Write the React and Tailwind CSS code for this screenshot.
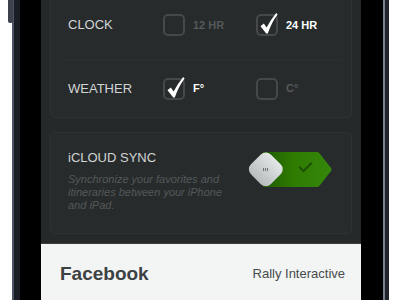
import React from "react";

const font = { fontFamily: '"Liberation Sans", Arial, sans-serif' };

const Check = () => (
  <svg
    className="absolute left-0 top-0"
    width="24"
    height="24"
    viewBox="0 0 24 24"
    style={{ overflow: "visible" }}
  >
    <path
      d="M4.5 12.2 L7.8 9.6 L10.6 13.4 Q14.5 6 20.2 -1 L21.6 0.6 Q15.6 8.5 11.8 19.6 L10.2 19.6 Z"
      fill="#ffffff"
    />
  </svg>
);

const Box = ({ checked, label }) => (
  <div className="flex items-center w-[93px]">
    <div className="relative w-[22px] h-[22px]">
      <div className="w-[22px] h-[22px] rounded-[5px] border-2 border-[#46494a]" />
      {checked && <Check />}
    </div>
    <span
      className={
        "ml-[8px] text-[11px] font-bold " +
        (checked ? "text-white" : "text-[#55595a]")
      }
    >
      {label}
    </span>
  </div>
);

const Toggle = () => (
  <svg width="88" height="38" viewBox="0 0 88 38">
    <defs>
      <linearGradient id="grn" x1="0" y1="0" x2="1" y2="0">
        <stop offset="0" stopColor="#1f5a00" />
        <stop offset="0.45" stopColor="#2f7c03" />
        <stop offset="1" stopColor="#34880a" />
      </linearGradient>
      <linearGradient id="knob" x1="0" y1="0" x2="0" y2="1">
        <stop offset="0" stopColor="#e4e7e8" />
        <stop offset="1" stopColor="#b8bcbd" />
      </linearGradient>
    </defs>
    <path
      d="M16 1 L70 1 Q71.5 1 72.5 2.3 L84.2 17.3 Q85 18.5 84.2 19.7 L72.5 34.7 Q71.5 36 70 36 L16 36 Z"
      fill="url(#grn)"
    />
    <path
      d="M53 15 L56.5 18.5 L64 11 L65.5 12.5 L56.5 21.5 L51.5 16.5 Z"
      fill="#1f4f05"
    />
    <rect
      x="4.8"
      y="4.3"
      width="28"
      height="28"
      rx="7"
      fill="url(#knob)"
      transform="rotate(45 18.8 18.3)"
    />
    <rect x="16" y="17" width="1" height="3" fill="#6b6f70" />
    <rect x="18" y="17" width="1" height="3" fill="#6b6f70" />
    <rect x="20" y="17" width="1" height="3" fill="#6b6f70" />
  </svg>
);

export default function App() {
  return (
    <div className="w-[400px] h-[300px] bg-white flex overflow-hidden relative" style={font}>
      {/* left frame */}
      <div className="w-[12px] h-full bg-white relative">
        <div className="absolute left-[8px] top-0 w-[5px] h-[23px] bg-[#3c424b] rounded-b-[2px]" />
      </div>
      <div className="w-[2px] h-full bg-[#4c5462]" />
      <div className="w-[6px] h-full bg-[#1a1e24]" />
      <div className="w-[21px] h-full bg-black" />

      {/* screen */}
      <div className="w-[320px] h-full bg-[#25292a] flex flex-col">
        <div className="px-[9px]">
          <div className="-mt-[6px] h-[124px] rounded-[5px] border border-[#2e3233] bg-[#272b2c] flex flex-col">
            <div className="h-[64px] pb-[4px] flex items-center pl-[17px]">
              <span className="w-[95px] text-[13px] text-[#d2d5d6]">CLOCK</span>
              <Box label="12 HR" />
              <Box checked label="24 HR" />
            </div>
            <div className="h-px ml-[9px] mr-[10px] bg-[#2c3031]" />
            <div className="flex-1 flex items-center pl-[17px]">
              <span className="w-[95px] text-[13px] text-[#d2d5d6]">WEATHER</span>
              <Box checked label="F°" />
              <Box label="C°" />
            </div>
          </div>

          <div className="mt-[14px] h-[102px] rounded-[5px] border border-[#2e3233] bg-[#272b2c] flex pl-[17px] pr-[18px]">
            <div className="flex-1 pt-[17px]">
              <div className="text-[13px] leading-[16px] text-[#d2d5d6]">iCLOUD SYNC</div>
              <p className="mt-[7px] w-[165px] text-[11px] leading-[13px] italic text-[#54595a]">
                Synchronize your favorites and itineraries between your iPhone and iPad.
              </p>
            </div>
            <div className="pt-[18px] -mr-[2px]">
              <Toggle />
            </div>
          </div>
        </div>

        <div className="mt-[9px] h-px bg-[#3a3e3f]" />
        <div className="flex-1 bg-[#f3f4f4] flex items-start justify-between pl-[19px] pr-[16px] pt-[16px]">
          <span className="text-[19px] font-bold text-[#3c4143]">Facebook</span>
          <span className="text-[13px] text-[#464b4d] mt-[4px]">Rally Interactive</span>
        </div>
      </div>

      {/* right frame */}
      <div className="w-[22px] h-full bg-black" />
      <div className="w-[2px] h-full bg-[#7a8291]" />
      <div className="w-[4px] h-full bg-[#20242a]" />
      <div className="flex-1 h-full bg-white" />
    </div>
  );
}
